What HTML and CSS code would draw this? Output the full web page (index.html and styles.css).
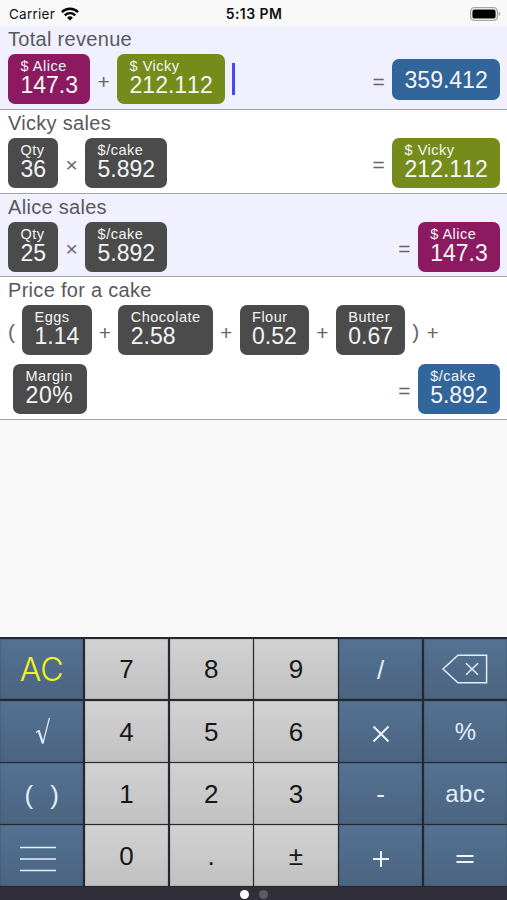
FILE: index.html
```html
<!DOCTYPE html>
<html lang="en">
<head>
    <meta charset="UTF-8">
    <meta name="viewport" content="width=device-width, initial-scale=1.0">
    <title>Calculator</title>
    <link rel="stylesheet" href="styles.css">
</head>
<body>
<div class="status">
    <div class="carrier">
        Carrier
        <svg width="18" height="14" viewBox="0 0 18 14" fill="none" stroke="#000" stroke-width="2.4">
            <path d="M.9 5.1a11.6 11.6 0 0 1 16.2 0"/>
            <path d="M3.8 8.3a7.4 7.4 0 0 1 10.4 0"/>
            <path d="M9 13.6 6.1 10.7a4.1 4.1 0 0 1 5.8 0z" fill="#000" stroke="none"/>
        </svg>
    </div>
    <div class="time">5:13 PM</div>
    <div class="battery">
        <svg width="31" height="14" viewBox="0 0 31 14">
            <rect x=".7" y=".7" width="26.6" height="12.6" rx="3.8" fill="#fff" stroke="#a5a5a5" stroke-width="1.3"/>
            <rect x="2.4" y="2.4" width="23.2" height="9.2" rx="2.2" fill="#000"/>
            <path d="M28.7 4.8v4.4q1.6-.6 1.6-2.2t-1.6-2.2z" fill="#a5a5a5"/>
        </svg>
    </div>
</div>

<div class="sheet">
    <div class="row tinted">
        <div class="title">Total revenue</div>
        <div class="line">
            <div class="chip pink"><small>$ Alice</small><b>147.3</b></div>
            <span class="op">+</span>
            <div class="chip green"><small>$ Vicky</small><b>212.112</b></div>
            <span class="cursor"></span>
            <span class="op equals">=</span>
            <div class="chip blue single"><b>359.412</b></div>
        </div>
    </div>
    <div class="row">
        <div class="title">Vicky sales</div>
        <div class="line">
            <div class="chip"><small>Qty</small><b>36</b></div>
            <span class="op">×</span>
            <div class="chip"><small>$/cake</small><b>5.892</b></div>
            <span class="op equals">=</span>
            <div class="chip green"><small>$ Vicky</small><b>212.112</b></div>
        </div>
    </div>
    <div class="row tinted">
        <div class="title">Alice sales</div>
        <div class="line">
            <div class="chip"><small>Qty</small><b>25</b></div>
            <span class="op">×</span>
            <div class="chip"><small>$/cake</small><b>5.892</b></div>
            <span class="op equals">=</span>
            <div class="chip pink"><small>$ Alice</small><b>147.3</b></div>
        </div>
    </div>
    <div class="row tall">
        <div class="title">Price for a cake</div>
        <div class="line">
            <span class="paren open">(</span>
            <div class="chip"><small>Eggs</small><b>1.14</b></div>
            <span class="op">+</span>
            <div class="chip"><small>Chocolate</small><b>2.58</b></div>
            <span class="op">+</span>
            <div class="chip"><small>Flour</small><b>0.52</b></div>
            <span class="op">+</span>
            <div class="chip"><small>Butter</small><b>0.67</b></div>
            <span class="paren close">)</span>
            <span class="op">+</span>
        </div>
        <div class="line second">
            <div class="chip margin"><small>Margin</small><b>20%</b></div>
            <span class="op equals">=</span>
            <div class="chip blue"><small>$/cake</small><b>5.892</b></div>
        </div>
    </div>
</div>

<div class="keypad">
    <div class="key fn ac">AC</div>
    <div class="key">7</div>
    <div class="key">8</div>
    <div class="key">9</div>
    <div class="key fn slash">/</div>
    <div class="key fn back">
        <svg width="46" height="30" viewBox="0 0 46 30" fill="none" stroke="#e4eefa" stroke-width="1.5">
            <path d="M1 15 16 1.2h28.6v27.6H16z"/>
            <path d="M24 9.2l12 11.6M36 9.2 24 20.8"/>
        </svg>
    </div>

    <div class="key fn back">
        <svg class="root" width="16" height="28" viewBox="0 0 16 28" fill="none" stroke="#e4eefa">
            <path d="M1 15.4l2.8-2" stroke-width="1.2"/>
            <path d="M3.6 13.4 7.8 26" stroke-width="2.2"/>
            <path d="M7.8 27 14.4 1" stroke-width="1.2"/>
        </svg>
    </div>
    <div class="key">4</div>
    <div class="key">5</div>
    <div class="key">6</div>
    <div class="key fn">
        <svg class="low" width="18" height="18" viewBox="0 0 18 18" stroke="#eff5fc" stroke-width="1.9">
            <path d="M1.5 1.5l15 15M16.5 1.5l-15 15"/>
        </svg>
    </div>
    <div class="key fn percent">%</div>

    <div class="key fn brackets"><span>(</span><span>)</span></div>
    <div class="key">1</div>
    <div class="key">2</div>
    <div class="key">3</div>
    <div class="key fn">-</div>
    <div class="key fn abc">abc</div>

    <div class="key fn menu">
        <svg class="low" width="36" height="26" viewBox="0 0 36 26" stroke="#e8f1fb" stroke-width="1.7">
            <path d="M0 1.5h36M0 13h36M0 24.5h36"/>
        </svg>
    </div>
    <div class="key">0</div>
    <div class="key">.</div>
    <div class="key">±</div>
    <div class="key fn">
        <svg class="low" width="18" height="18" viewBox="0 0 18 18" stroke="#eff5fc" stroke-width="2">
            <path d="M1 9h16M9 1v16"/>
        </svg>
    </div>
    <div class="key fn">
        <svg class="low" width="18" height="10" viewBox="0 0 18 10" stroke="#eff5fc" stroke-width="2">
            <path d="M.5 2h17M.5 8h17"/>
        </svg>
    </div>
</div>
<div class="pager">
    <span class="dot active"></span>
    <span class="dot"></span>
</div>
</body>
</html>
```
FILE: styles.css
```css
* {
    box-sizing: border-box;
}
body {
    margin: 0;
    height: 900px;
    display: flex;
    flex-direction: column;
    background: #f9f9f9;
    font-family: "Liberation Sans", Arial, sans-serif;
    overflow: hidden;
}

/* status bar */
.status {
    height: 26px;
    display: grid;
    grid-template-columns: 1fr auto 1fr;
    align-items: center;
    padding: 1px 6px 0 7px;
    font-family: Inter, sans-serif;
    font-size: 13.5px;
    color: #111;
}
.carrier {
    display: flex;
    align-items: center;
    gap: 6px;
    padding-left: 2px;
    letter-spacing: 0.25px;
}
.time {
    font-weight: 600;
    font-size: 14px;
    letter-spacing: 0.45px;
}
.battery {
    display: flex;
    justify-content: flex-end;
}

/* formulas */
.sheet {
    flex: 1;
}
.row {
    height: 83.8px;
    padding: 0 7px 0 8px;
    background: #fff;
    border-bottom: 1.5px solid #a3a3a8;
    color: #58585c;
}
.tinted {
    background: #f0f0ff;
}
.tall {
    height: 142.4px;
}
.title {
    height: 28px;
    line-height: 27px;
    font-size: 20px;
    letter-spacing: 0.3px;
}
.line {
    display: flex;
    height: 50px;
    align-items: center;
}
.second {
    margin-top: 8.5px;
    padding-left: 5px;
}
.chip {
    height: 50px;
    padding: 4px 12.3px 0 12.5px;
    border-radius: 7px;
    background: #4b4b4b;
    color: #f5f5f5;
}
.chip small {
    display: block;
    height: 15px;
    line-height: 16px;
    font-size: 14.5px;
    letter-spacing: 0.5px;
}
.chip b {
    display: block;
    line-height: 25px;
    font-size: 23px;
    font-weight: normal;
    font-kerning: none;
}
.margin {
    min-width: 73.5px;
}
.margin b {
    letter-spacing: 0.6px;
}
.chip.pink {
    background: #8c1a60;
}
.chip.green {
    background: #758c1b;
}
.chip.blue {
    background: #326599;
}
.chip.single {
    height: 41px;
    padding-top: 9px;
}
.op {
    width: 26.7px;
    padding-top: 5px;
    text-align: center;
    font-size: 21px;
    line-height: 24px;
    color: #666;
}
.equals {
    margin-left: auto;
}
.paren {
    padding-top: 3px;
    font-size: 21px;
    color: #666;
}
.open {
    width: 14px;
}
.close {
    width: 14px;
    padding-left: 7px;
}
.cursor {
    width: 3px;
    height: 32px;
    margin-left: 7px;
    background: #4a46f0;
}

/* keys */
.keypad {
    display: grid;
    grid-template-columns: repeat(6, 1fr);
    grid-template-rows: repeat(4, 1fr);
    gap: 1.5px;
    height: 250px;
    padding: 1.5px 0 1px;
    background: #25272e;
}
.key {
    display: flex;
    align-items: center;
    justify-content: center;
    padding-top: 2px;
    background: linear-gradient(#d2d2d2, #c1c1c1);
    box-shadow: inset 0 0 1.5px #777;
    font-size: 26px;
    color: #161616;
}
.fn {
    background: linear-gradient(#547293, #4b6480);
    box-shadow: inset 0 0 1.5px #2c3f55;
    color: #e4eefa;
}
.ac {
    font-family: Inter, sans-serif;
    font-weight: 300;
    font-size: 32px;
    color: #f2f51a;
}
.slash {
    padding-top: 4px;
}
.back {
    padding-top: 0;
}
.percent {
    font-size: 24px;
}
.abc {
    font-size: 24px;
    letter-spacing: 0.6px;
}
.brackets {
    gap: 17px;
    padding-top: 4px;
}
.low {
    margin-top: 4px;
}
.root {
    margin-left: 2px;
}
.menu {
    padding-right: 7px;
}

.pager {
    display: flex;
    align-items: center;
    justify-content: center;
    gap: 10px;
    height: 13px;
    padding-top: 1px;
    background: #2f2e39;
}
.dot {
    width: 9px;
    height: 9px;
    border-radius: 50%;
    background: #5c5b66;
}
.active {
    background: #fff;
}
```
